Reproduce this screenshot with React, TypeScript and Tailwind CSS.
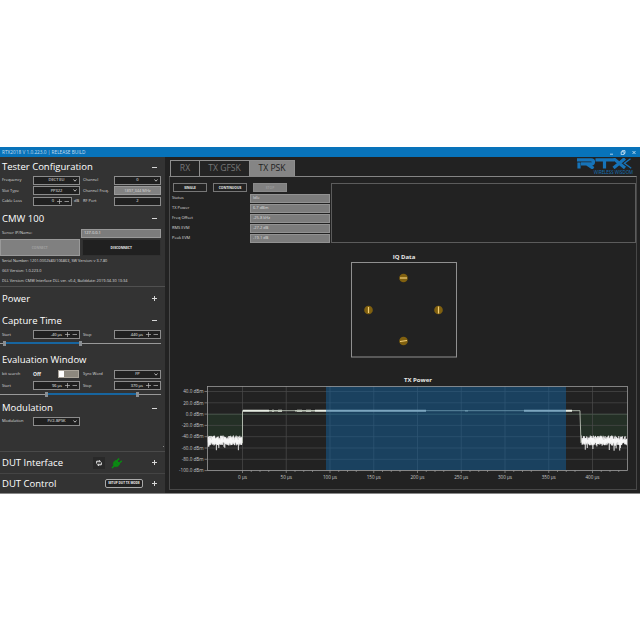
import React from 'react';

interface SectionTitleProps {
  title: string;
  sign?: '+' | '-';
  className: string;
  children?: React.ReactNode;
}

const Sign: React.FC<{ sign: '+' | '-' }> = ({ sign }) => (
  <svg className="h-[5px] w-[5px] shrink-0" viewBox="0 0 5 5" stroke="#d8d8d8" strokeWidth="1">
    <path d={sign === '+' ? 'M0 2.5H5M2.5 0V5' : 'M0 2.5H5'} />
  </svg>
);

const SectionTitle: React.FC<SectionTitleProps> = ({ title, sign, className, children }) => (
  <div className={`flex shrink-0 items-center pr-[8px] pl-[2px] ${className}`}>
    <h2 className="flex-1 whitespace-nowrap text-[9.5px] leading-none text-white">{title}</h2>
    {children}
    {sign && <Sign sign={sign} />}
  </div>
);

const Chevron = () => (
  <svg className="h-[3px] w-[4px] shrink-0" viewBox="0 0 4 3" fill="none" stroke="#ddd" strokeWidth="0.8">
    <path d="M0.5 0.5L2 2.2L3.5 0.5" />
  </svg>
);

const Select: React.FC<{ value: string; disabled?: boolean }> = ({ value, disabled }) => (
  <div className="flex h-[9px] w-[47px] items-center border border-[#8c8c8c] bg-[#202020] pr-[2px]">
    <span className="flex-1 pl-[6px] text-center text-[#eee]">{value}</span>
    {disabled ? <span className="w-[4px]" /> : <Chevron />}
  </div>
);

const Stepper: React.FC<{ value: string }> = ({ value }) => (
  <div className="flex h-[9px] w-[47px] items-center justify-end gap-[2px] border border-[#8c8c8c] bg-[#202020] pr-[2px]">
    <span className="pr-[1px] text-[#eee]">{value}</span>
    <svg className="h-[5px] w-[12px]" viewBox="0 0 12 5" stroke="#bbb" strokeWidth="0.7">
      <path d="M0 2.5H5M2.5 0V5M7.5 2.5H12" />
    </svg>
  </div>
);

interface FieldRowProps {
  label: string;
  field: React.ReactNode;
  label2?: string;
  field2?: React.ReactNode;
  unit?: string;
  className?: string;
}

const FieldRow: React.FC<FieldRowProps> = ({ label, field, label2, field2, unit, className = 'h-[10.5px]' }) => (
  <div className={`flex shrink-0 items-center whitespace-nowrap pl-[2px] ${className}`}>
    <span className="w-[31px]">{label}</span>
    <div className="w-[47px]">{field}</div>
    <span className="w-[34px] pl-[3px]">
      {unit ? (
        <span className="-ml-[9px] flex">
          <span className="w-[9px]">{unit}</span>
          {label2}
        </span>
      ) : (
        label2
      )}
    </span>
    {field2}
  </div>
);

// left / right are the handle positions in px on the 160px track
const RangeSlider: React.FC<{ left: number; right: number }> = ({ left, right }) => (
  <div className="relative flex h-[7px] w-[161px] shrink-0 items-center">
    <div className="h-px w-full bg-[#999]" />
    <div className="absolute top-[2px] h-[2px] bg-[#17659f]" style={{ left, width: right - left }} />
    {[left, right].map((x) => (
      <div key={x} className="absolute top-[1px] h-[5px] w-[3px] bg-[#8a8e92]" style={{ left: x - 1 }} />
    ))}
  </div>
);

const Sidebar = () => (
  <aside className="flex w-[167px] shrink-0 flex-col border-r-2 border-[#222] bg-[#333] text-[4px] leading-none text-[#dedede]">
    <SectionTitle title="Tester Configuration" sign="-" className="h-[18px] pt-[2px]" />
    <FieldRow label="Frequency" field={<Select value="DECT EU" />} label2="Channel" field2={<Select value="0" />} />
    <FieldRow
      label="Slot Type"
      field={<Select value="PP322" />}
      label2="Channel Freq."
      field2={
        <div className="flex h-[9px] w-[47px] items-center justify-center border border-[#999] bg-[#828282] text-[#d8d8d8]">
          1897,344 MHz
        </div>
      }
    />
    <FieldRow
      label="Cable Loss"
      field={
        <div className="w-[39px] [&>div]:w-[39px]">
          <Stepper value="0" />
        </div>
      }
      unit="dB"
      label2="RF Port"
      field2={<Select value="2" disabled />}
    />

    <SectionTitle title="CMW 100" sign="-" className="h-[20.5px] pt-[4px]" />
    <div className="flex h-[12px] shrink-0 items-center pl-[2px]">
      <span className="w-[79px]">Server IP/Name:</span>
      <div className="flex h-[9px] w-[80px] items-center border border-[#999] bg-[#7c7c7c] pl-[2px] text-[#e4e4e4]">127.0.0.1</div>
    </div>
    <div className="flex h-[17px] w-[161px] shrink-0 gap-[2px] text-[3.3px] font-bold">
      <button className="flex-1 border border-[#999] bg-[#808080] text-[#a0a0a0]">CONNECT</button>
      <button className="flex-1 border border-[#303030] bg-[#202020] text-[#eee]">DISCONNECT</button>
    </div>
    <div className="flex h-[31px] shrink-0 flex-col border-b border-[#505050] pl-[2px] leading-[10px] whitespace-nowrap text-[3.85px]">
      <span>Serial Number: 1201.0002k83/106863, SW Version: v 3.7.80</span>
      <span>GUI Version: 1.0.223.0</span>
      <span>DLL Version: CMW Interface DLL ver. v0.4, Builddate: 2019-04-30 13:34</span>
    </div>

    <SectionTitle title="Power" sign="+" className="h-[23px]" />
    <SectionTitle title="Capture Time" sign="-" className="h-[19.5px] pt-[2px]" />
    <FieldRow label="Start" field={<Stepper value="-40 µs" />} label2="Stop" field2={<Stepper value="440 µs" />} className="h-[10px]" />
    <RangeSlider left={4} right={80} />

    <SectionTitle title="Evaluation Window" className="h-[22px] pt-[5px]" />
    <FieldRow
      label="bit search"
      field={
        <div className="flex items-center">
          <span className="w-[25px] text-[5px] font-bold text-[#eee]">Off</span>
          <div className="flex h-[8px] w-[21px] border border-[#aaa49a] bg-[#8d887e]">
            <div className="w-[5px] bg-white" />
          </div>
        </div>
      }
      label2="Sync Word"
      field2={<Select value="FP" />}
      className="h-[11.5px]"
    />
    <FieldRow label="Start" field={<Stepper value="96 µs" />} label2="Stop" field2={<Stepper value="370 µs" />} className="h-[11px]" />
    <RangeSlider left={46} right={137} />

    <SectionTitle title="Modulation" sign="-" className="h-[18px] pt-[2px]" />
    <FieldRow label="Modulation" field={<Select value="Pi/2-BPSK" />} />
    <div className="flex flex-1 items-end justify-end pb-[4px] pr-[1px]">
      <div className="h-px w-px bg-[#888]" />
    </div>

    <SectionTitle title="DUT Interface" sign="+" className="h-[22px] border-t border-[#4a4a4a]">
      <div className="flex h-[12px] w-[12px] items-center justify-center bg-[#292929]">
        <svg className="h-[6px] w-[6px]" viewBox="0 0 6 6" fill="none" stroke="#f0f0f0" strokeWidth="1">
          <path d="M0.7 3.6V1.2H4M3.2 0L4.4 1.2L3.2 2.4M5.3 2.4V4.8H2M2.8 3.6L1.6 4.8L2.8 6" />
        </svg>
      </div>
      <svg className="mr-[29px] ml-[6px] h-[12px] w-[12px]" viewBox="0 0 12 12" fill="#0b8a12" stroke="#0b8a12">
        <path d="M3.4 4L8 8.6C6.3 10.2 4.2 10 2.9 9.2C1.8 7.8 1.8 5.6 3.4 4Z" strokeWidth="0.4" />
        <path d="M5 4.8L8.2 1.4M7.4 7L10.8 3.8M3 9L1 11" strokeWidth="1.5" />
        <path d="M4 4L8 8L8.6 6.6L5.4 3.4Z" />
      </svg>
    </SectionTitle>
    <SectionTitle title="DUT Control" sign="+" className="h-[20px] border-t border-[#444]">
      <button className="mr-[9px] h-[9px] w-[38px] rounded-[2px] border border-[#aaa] bg-[#222] text-[3.1px] leading-none font-bold whitespace-nowrap text-[#eee]">
        SETUP DUT TX MODE
      </button>
    </SectionTitle>
  </aside>
);

const results = [
  ['Status', 'Idle'],
  ['TX Power', '6.7 dBm'],
  ['Freq Offset', '-25.8 kHz'],
  ['RMS EVM', '-27.2 dB'],
  ['Peak EVM', '-19.1 dB'],
];

const RtxLogo = () => (
  <div className="-mt-[2px] flex w-[56px] flex-col items-end text-[#1673b8]">
    <svg className="h-[11px] w-[56px]" viewBox="0 0 56 11" fill="none" stroke="currentColor" strokeWidth="3.2">
      <path d="M0 1.9H14Q16.5 1.9 16.5 3.9T14 5.9H4M2 4.4V10.5M9 5.5L16.5 10.4" />
      <path d="M18.5 1.9H37M27.5 2V10.5" />
      <path d="M36.5 0.5L48 10M48 0.5L36.5 10" />
      <path d="M46.5 0.8L43.8 3.2M53.5 0.8L47.4 5.3L54.2 10.2" strokeWidth="1.4" />
    </svg>
    <span className="mt-[1px] text-[4.4px] leading-none whitespace-nowrap">WIRELESS WISDOM</span>
  </div>
);

const iqPoints = [
  { x: 52.5, y: 16, d: 'M49 16H56' },
  { x: 17.5, y: 48, d: 'M17.5 45V51' },
  { x: 87.5, y: 48, d: 'M87.5 44.5V51.5' },
  { x: 52.5, y: 79, d: 'M49 79.5L56 78.5' },
];

const IqPlot = () => (
  <svg className="ml-[2px] h-[96px] w-[106px] shrink-0" viewBox="0 0 106 96">
    <rect x="0.5" y="0.5" width="105" height="94.5" fill="none" stroke="#909090" />
    {iqPoints.map((p) => (
      <g key={p.d}>
        <circle cx={p.x} cy={p.y} r="4.3" fill="#80600f" />
        <path d={p.d} stroke="#f3cf78" strokeWidth="1.2" />
      </g>
    ))}
  </svg>
);

// Noise floor between x0 and x1, seeded so it always draws the same
const noise = (x0: number, x1: number, seed: number) => {
  let s = seed;
  const rnd = () => {
    s = (s * 16807) % 2147483647;
    return s / 2147483647;
  };
  let d = '';
  for (let x = x0; x <= x1; x += 0.4) {
    const top = 49.5 + rnd() * 4.5;
    const bottom = 56 + rnd() * 3.5 + (rnd() > 0.85 ? rnd() * 7 : 0);
    d += `L${x.toFixed(1)} ${top.toFixed(1)}L${(x + 0.2).toFixed(1)} ${bottom.toFixed(1)}`;
  }
  return d.replace('L', 'M');
};

const levels = ['40.0', '20.0', '0.0', '-20.0', '-40.0', '-60.0', '-80.0', '-100.0'];
const times = [0, 50, 100, 150, 200, 250, 300, 350, 400];
const levelY = (i: number) => 5.5 + i * 11.3;
const timeX = (t: number) => 35.5 + t * 0.875;

const PowerPlot = () => (
  <svg className="h-[98px] w-[458px] font-['Open_Sans',sans-serif]" viewBox="-30 0 458 98">
    <rect x="0" y="28" width="35.5" height="23" fill="#243026" />
    <rect x="374" y="28" width="46.5" height="23" fill="#243026" />
    <g stroke="#4b4b4b" strokeWidth="0.7">
      {levels.map((l, i) => (
        <path key={l} d={`M0 ${levelY(i)}H420.5`} />
      ))}
      {times.map((t) => (
        <path key={t} d={`M${timeX(t)} 0V84.5`} />
      ))}
    </g>
    <path d="M0 28.3H374M374 28.3H420.5" stroke="#46584a" strokeWidth="0.7" fill="none" />
    <path d={noise(0.8, 35, 77)} fill="none" stroke="#fff" strokeWidth="0.55" />
    <path d={noise(374.5, 420, 191)} fill="none" stroke="#fff" strokeWidth="0.55" />
    <path d="M35.5 57V24.7H373V27L374 57" fill="none" stroke="#b9c2b4" strokeWidth="0.9" />
    <path d="M36 24.7H62M65 24.7H67M71 24.7H75M90 24.7H95M99 24.7H104M108 24.7H219M317 24.7H365" stroke="#e6ebe2" strokeWidth="2" />
    <path d="M62 24.7H75M88 24.7H108M258 24.7H261" stroke="#b9c2b4" strokeWidth="1.4" />
    <rect x="119" y="0" width="240" height="84" fill="#12609c" fillOpacity="0.5" />
    <rect x="0.5" y="0.5" width="420" height="84" fill="none" stroke="#999" strokeWidth="0.8" />
    <g stroke="#aaa" strokeWidth="0.6">
      {levels.map((l, i) => (
        <path key={l} d={`M-2.5 ${levelY(i)}H0`} />
      ))}
      {times.map((t) => (
        <path key={t} d={`M${timeX(t)} 84.5V87M${timeX(t) + 8.75} 84.5V86M${timeX(t) + 17.5} 84.5V86M${timeX(t) + 26.25} 84.5V86`} />
      ))}
    </g>
    <g fill="#c8c8c8" fontSize="4.6">
      {levels.map((l, i) => (
        <text key={l} x="-3.5" y={levelY(i) + 1.7} textAnchor="end">
          {l} dBm
        </text>
      ))}
      {times.map((t) => (
        <text key={t} x={timeX(t)} y="93" textAnchor="middle">
          {t} µs
        </text>
      ))}
    </g>
  </svg>
);

const tabs = [
  { name: 'RX', style: 'w-[30px] bg-[#242424] text-[#777]' },
  { name: 'TX GFSK', style: 'w-[51px] bg-[#242424] text-[#777]' },
  { name: 'TX PSK', style: 'w-[46px] bg-[#858585] text-[#202020]' },
];

const App = () => (
  <div className="flex h-[640px] w-[640px] flex-col bg-white pt-[147px] font-['Open_Sans','Noto_Sans',sans-serif]">
    <header className="flex h-[10px] shrink-0 items-center justify-between bg-[#0873ba] pr-[4px] pl-[2px] text-[4.75px] leading-none text-[#c6def0]">
      <span>RTX2018 V 1.0.223.0 | RELEASE BUILD</span>
      <svg className="h-[5px] w-[26px]" viewBox="0 0 26 5" fill="none" stroke="#d5eaf8" strokeWidth="0.8">
        <path d="M0 4.2H3M11.2 1.8H14V4.6H11.2ZM12.2 1.8V0.6H15V3.4H14M22.5 1L25.5 4M25.5 1L22.5 4" />
      </svg>
    </header>

    <div className="flex h-[337px] shrink-0 border-b border-[#888] bg-[#222]">
      <Sidebar />

      <main className="flex flex-1 flex-col pt-[3px] pr-[3px] pb-[3px] pl-[2px]">
        <div className="flex h-[16px] shrink-0 justify-between pr-[4px]">
          <nav className="flex pl-[1px]">
            {tabs.map((tab) => (
              <button
                key={tab.name}
                className={`-mr-px h-[17px] border border-[#8e8e8e] text-[8.6px] leading-none whitespace-nowrap ${tab.style}`}
              >
                {tab.name}
              </button>
            ))}
          </nav>
          <RtxLogo />
        </div>

        <div className="flex flex-1 flex-col items-center border border-[#484848] border-t-[#858585] pt-[6px]">
          <div className="flex h-[60px] w-full shrink-0 pl-[2px]">
            <div className="flex w-[159px] shrink-0 flex-col">
              <div className="flex h-[10px] shrink-0 gap-[6px] pl-[1px] text-[3.3px] leading-none font-bold text-[#eee]">
                <button className="h-[9px] w-[34px] border border-[#777]">SINGLE</button>
                <button className="h-[9px] w-[34px] border border-[#777]">CONTINUOUS</button>
                <button className="h-[9px] w-[34px] border border-[#8a8a8a] bg-[#808080] text-[#999]">STOP</button>
              </div>
              {results.map(([label, value]) => (
                <div key={label} className="flex h-[10px] shrink-0 items-center text-[4px] leading-none text-[#dcdcdc]">
                  <span className="w-[78px]">{label}</span>
                  <span className="flex h-[9px] w-[80px] items-center border border-[#929292] bg-[#7c7c7c] pl-[2px]">{value}</span>
                </div>
              ))}
            </div>
            <div className="flex-1 border border-[#5c5c5c]" />
          </div>

          <h3 className="mt-[10px] ml-[2px] h-[9px] shrink-0 text-[6px] leading-[8px] font-bold text-[#e8e8e8]">IQ Data</h3>
          <IqPlot />
          <h3 className="mt-[19px] ml-[30px] h-[9px] shrink-0 text-[6px] leading-[7px] font-bold text-[#e8e8e8]">TX Power</h3>
          <div className="ml-[6px] w-[458px] shrink-0">
            <PowerPlot />
          </div>
        </div>
      </main>
    </div>
  </div>
);

export default App;
